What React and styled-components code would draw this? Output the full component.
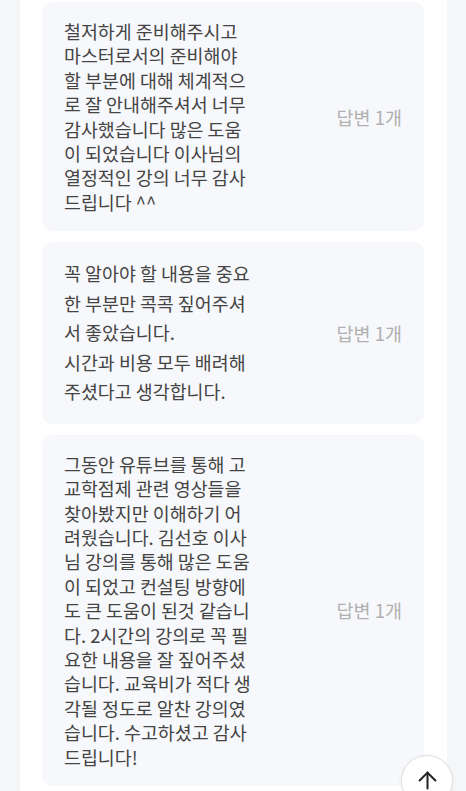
import React from 'react'
import styled, { createGlobalStyle } from 'styled-components';
import { ArrowUp } from 'lucide-react';

const GlobalStyle = createGlobalStyle`
  html, body {
    margin: 0;
    padding: 0;
    background: #f5f6f8;
    font-family: "Noto Sans CJK KR", "Noto Sans", sans-serif;
  }
`;

const Page = styled.div`
  min-height: 100vh;
  padding: 0 19px 0 20px;
  overflow: hidden;
`;

const Panel = styled.div`
  background: #ffffff;
  min-height: 100vh;
  padding: 2px 23px 4px 22px;
  display: flex;
  flex-direction: column;
  gap: 11px;
`;

const Card = styled.div`
  background: #f7f8fb;
  border-radius: 10px;
  padding: 17px 22px 17px 22px;
  display: flex;
  justify-content: space-between;
  align-items: center;
`;

const Body = styled.p`
  margin: 0;
  font-size: 18.4px;
  line-height: ${(p) => p.$lh}px;
  color: #444444;
  white-space: nowrap;
`;

const Replies = styled.span`
  font-size: 18.5px;
  color: #b0b0b0;
  white-space: nowrap;
`;

const TopButton = styled.button`
  position: fixed;
  right: 13px;
  bottom: -16px;
  width: 52px;
  height: 52px;
  border-radius: 50%;
  border: 1px solid #dedede;
  background: #ffffff;
  box-shadow: 0 1px 4px rgba(0, 0, 0, 0.06);
  display: flex;
  align-items: flex-start;
  justify-content: center;
  padding: 11px 0 0;
  color: #222;
`;

const reviews = [
  {
    id: 1,
    lh: 24.4,
    lines: [
      '철저하게 준비해주시고',
      '마스터로서의 준비해야',
      '할 부분에 대해 체계적으',
      '로 잘 안내해주셔서 너무',
      '감사했습니다 많은 도움',
      '이 되었습니다 이사님의',
      '열정적인 강의 너무 감사',
      '드립니다 ^^',
    ],
  },
  {
    id: 2,
    lh: 29.5,
    lines: [
      '꼭 알아야 할 내용을 중요',
      '한 부분만 콕콕 짚어주셔',
      '서 좋았습니다.',
      '시간과 비용 모두 배려해',
      '주셨다고 생각합니다.',
    ],
  },
  {
    id: 3,
    lh: 24.4,
    lines: [
      '그동안 유튜브를 통해 고',
      '교학점제 관련 영상들을',
      '찾아봤지만 이해하기 어',
      '려웠습니다. 김선호 이사',
      '님 강의를 통해 많은 도움',
      '이 되었고 컨설팅 방향에',
      '도 큰 도움이 된것 같습니',
      '다. 2시간의 강의로 꼭 필',
      '요한 내용을 잘 짚어주셨',
      '습니다. 교육비가 적다 생',
      '각될 정도로 알찬 강의였',
      '습니다. 수고하셨고 감사',
      '드립니다!',
    ],
  },
];

const App = () => {
  return (
    <Page>
      <GlobalStyle />
      <Panel>
        {reviews.map((item) => (
          <Card key={item.id}>
            <Body $lh={item.lh}>
              {item.lines.map((line, i) => (
                <React.Fragment key={i}>
                  {line}
                  {i < item.lines.length - 1 && <br />}
                </React.Fragment>
              ))}
            </Body>
            <Replies>답변 1개</Replies>
          </Card>
        ))}
      </Panel>
      <TopButton aria-label="맨 위로">
        <ArrowUp size={27} strokeWidth={1.8} />
      </TopButton>
    </Page>
  )
}

export default App
